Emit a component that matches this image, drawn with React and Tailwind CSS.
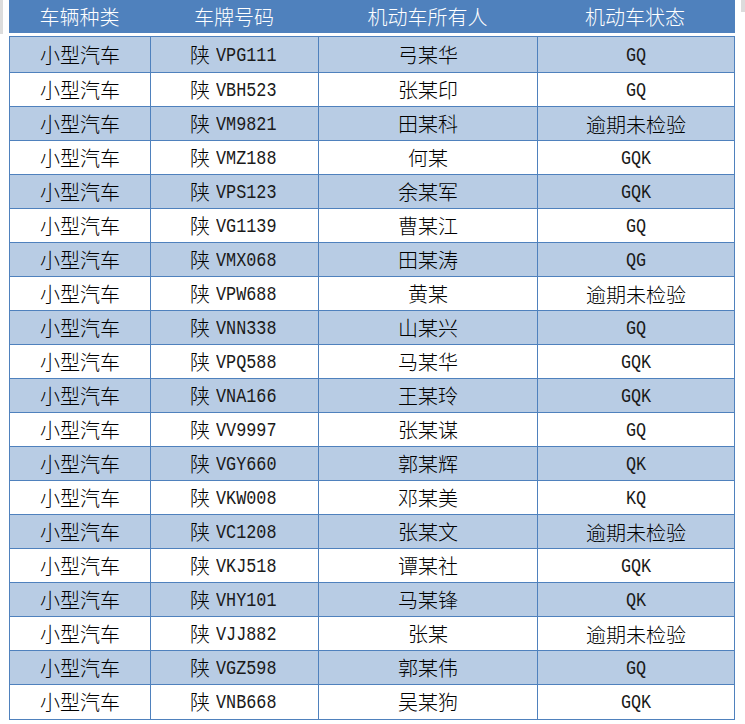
import React from 'react';

const rows = [
  ['VPG111', '弓某华', 'GQ'],
  ['VBH523', '张某印', 'GQ'],
  ['VM9821', '田某科', '逾期未检验'],
  ['VMZ188', '何某', 'GQK'],
  ['VPS123', '余某军', 'GQK'],
  ['VG1139', '曹某江', 'GQ'],
  ['VMX068', '田某涛', 'QG'],
  ['VPW688', '黄某', '逾期未检验'],
  ['VNN338', '山某兴', 'GQ'],
  ['VPQ588', '马某华', 'GQK'],
  ['VNA166', '王某玲', 'GQK'],
  ['VV9997', '张某谋', 'GQ'],
  ['VGY660', '郭某辉', 'QK'],
  ['VKW008', '邓某美', 'KQ'],
  ['VC1208', '张某文', '逾期未检验'],
  ['VKJ518', '谭某社', 'GQK'],
  ['VHY101', '马某锋', 'QK'],
  ['VJJ882', '张某', '逾期未检验'],
  ['VGZ598', '郭某伟', 'GQ'],
  ['VNB668', '吴某狗', 'GQK'],
];

const cjk = "font-['Noto_Sans_CJK_SC',sans-serif] text-[20px] font-light";
// half-width latin, narrowed to ~10px per char like the sheet's font
const latin = "inline-block font-['Liberation_Mono',monospace] text-[20px] font-normal text-[#1a1a1a] scale-x-[0.84]";
const cols = 'grid grid-cols-[141px_168px_219px_196px]';

const Status = ({ value }) =>
  /^[A-Z]+$/.test(value)
    ? <span className={`${latin} origin-center`}>{value}</span>
    : <span className={cjk}>{value}</span>;

export default function App() {
  return (
    <div className="w-[745px] h-[724px] bg-white relative overflow-hidden">
      <div className="absolute left-0 top-0 w-[3px] h-[34px] bg-[#dcdcdc]" />
      <div className="absolute right-0 top-0 w-[4px] h-[12px] bg-[#dcdcdc]" />
      <div className="pl-[9px]">
        {/* header */}
        <div className={`${cols} w-[726px] h-[33px] bg-[#4f81bd] text-white ${cjk}`}>
          {['车辆种类', '车牌号码', '机动车所有人', '机动车状态'].map((h) => (
            <div key={h} className="flex items-center justify-center leading-none">{h}</div>
          ))}
        </div>

        {/* body */}
        <div className="mt-[3px] w-[726px] border border-[#4f81bd] text-black">
          {rows.map(([plate, owner, status], i) => (
            <div
              key={plate}
              className={`${cols} ${i === 0 ? 'h-[36px]' : 'h-[34px]'} ${i % 2 === 0 ? 'bg-[#b8cce4]' : 'bg-white'} ${i < rows.length - 1 ? 'border-b border-[#4f81bd]' : ''}`}
            >
              <div className={`flex items-center justify-center border-r border-[#4f81bd] ${cjk}`}>小型汽车</div>
              <div className="flex items-center pl-[39px] border-r border-[#4f81bd]">
                <span className={cjk}>陕</span>
                <span className={`${latin} origin-left ml-[6px] pt-[2px]`}>{plate}</span>
              </div>
              <div className={`flex items-center justify-center border-r border-[#4f81bd] ${cjk}`}>{owner}</div>
              <div className="flex items-center justify-center pt-[2px]">
                <Status value={status} />
              </div>
            </div>
          ))}
        </div>
      </div>
    </div>
  );
}
